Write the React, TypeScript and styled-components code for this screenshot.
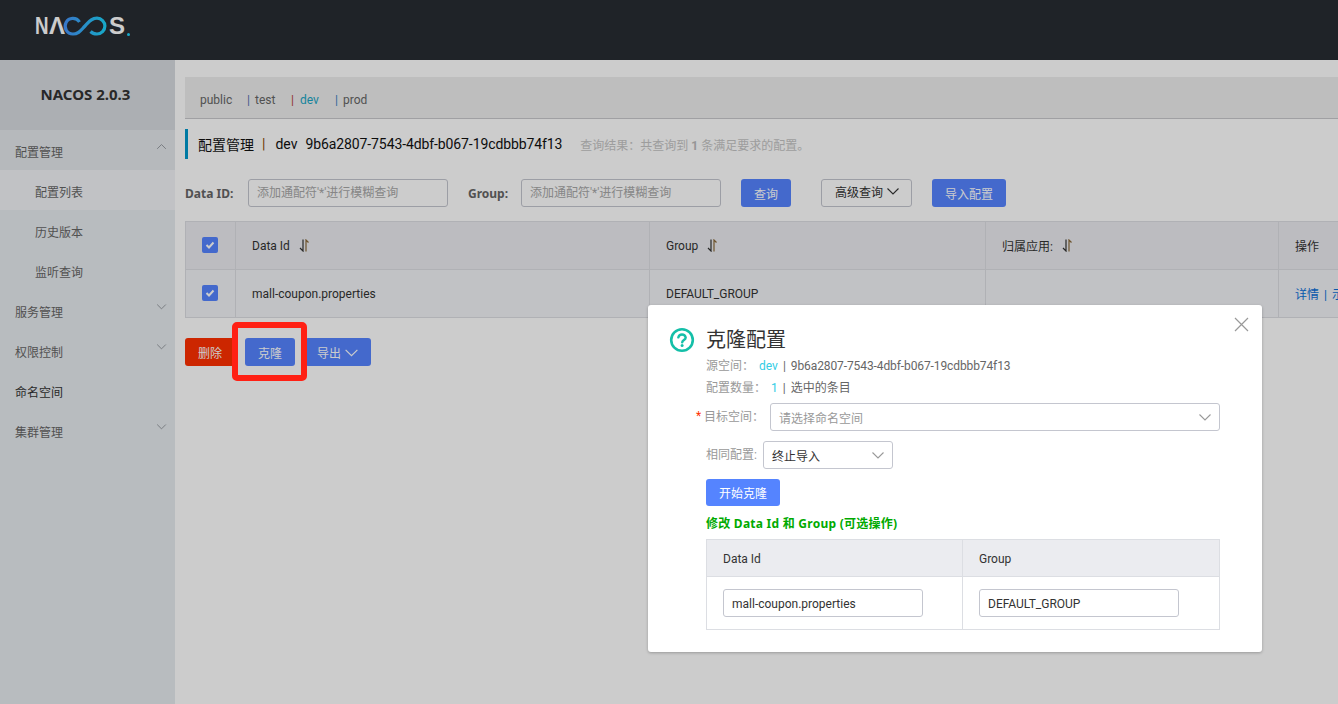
import styled, { createGlobalStyle } from "styled-components";

const GlobalStyle = createGlobalStyle`
  html, body {
    margin: 0;
    height: 100%;
    overflow: hidden;
    background: #fff;
    font-family: Roboto, "Noto Sans CJK SC", sans-serif;
    font-size: 12px;
    color: #333;
  }
  * { box-sizing: border-box; }
`;

const Page = styled.div`
  position: relative;
  width: 1338px;
  height: 704px;
  overflow: hidden;
`;

const Header = styled.header`
  height: 60px;
  background: #272c33;
  padding: 14px 0 0 35px;
`;

const Logo = styled.div`
  display: flex;
  align-items: center;
  height: 24px;
  color: #fff;
  font-family: "Liberation Sans", sans-serif;
  font-weight: 700;
  font-size: 24px;
  line-height: 24px;
`;

const LogoLetter = styled.span<{ $width: number; $scale?: number }>`
  display: inline-block;
  flex: none;
  width: ${(p) => p.$width}px;
  transform: scaleX(${(p) => p.$scale ?? 1});
  transform-origin: left center;
`;

const LogoWave = styled.svg`
  flex: none;
  margin-left: -3px;
`;

const LogoDot = styled.span`
  align-self: flex-end;
  width: 3px;
  height: 3px;
  margin: 0 0 2px 1px;
  background: #1ed2fa;
  border-radius: 50%;
`;

const Body = styled.div`
  display: flex;
  height: 644px;
`;

const Sidebar = styled.nav`
  flex: 0 0 175px;
  background: #e6ebef;
`;

const Version = styled.div`
  height: 70px;
  background: #d8dbe0;
  padding: 24px 4px 0 0;
  text-align: center;
  font-family: "Noto Sans", "Noto Sans CJK SC", sans-serif;
  font-size: 15px;
  line-height: 20px;
  font-weight: 700;
  color: #333;
`;

const MenuItem = styled.div<{ $sub?: boolean; $active?: boolean; $open?: boolean; $dark?: boolean }>`
  height: 40px;
  display: flex;
  align-items: center;
  justify-content: space-between;
  padding: 3px 8px 0 ${(p) => (p.$sub ? 35 : 15)}px;
  color: ${(p) => (p.$dark ? "#333" : "#666")};
  background: ${(p) => (p.$active ? "#f2f3f7" : p.$open ? "#e4e8ec" : "transparent")};
  svg {
    margin-bottom: 10px;
    color: #8b9096;
  }
`;

const Main = styled.main`
  flex: 1;
  min-width: 0;
  padding: 17px 0 0 10px;
  overflow: hidden;
`;

const NamespaceBar = styled.div`
  height: 42px;
  background: #eeeeee;
  border-bottom: 1px solid #c8c8cc;
  display: flex;
  align-items: flex-end;
  padding: 0 0 8px 15px;
  line-height: 20px;
  color: #666;
`;

const Namespace = styled.span<{ $width: number; $active?: boolean }>`
  width: ${(p) => p.$width}px;
  color: ${(p) => (p.$active ? "#1ba6c4" : "#666")};
`;

const NsDivider = styled.span<{ $color: string; $width?: number }>`
  width: ${(p) => p.$width ?? 8}px;
  color: ${(p) => p.$color};
`;

const PageTitle = styled.div`
  margin-top: 10px;
  height: 30px;
  border-left: 3px solid #09c;
  padding-left: 10px;
  display: flex;
  align-items: center;
  font-size: 14px;
  color: #111;
  white-space: pre;
`;

const TitleBar = styled.span`
  margin: 0 10px 0 8px;
  color: #8a4a00;
`;

const NamespaceId = styled.span`
  margin-left: 8px;
  letter-spacing: -0.1px;
`;

const QueryResult = styled.span`
  margin-left: 18px;
  font-size: 12px;
  color: #c5c5c5;
  strong {
    color: #bbb;
  }
`;

const FilterRow = styled.div`
  display: flex;
  align-items: center;
  height: 28px;
  margin-top: 20px;
`;

const FilterLabel = styled.label<{ $width: number }>`
  flex: 0 0 ${(p) => p.$width}px;
  font-family: "Noto Sans", "Noto Sans CJK SC", sans-serif;
  font-weight: 700;
  color: #666;
`;

const FilterInput = styled.div`
  width: 200px;
  height: 28px;
  border: 1px solid #c4c6cf;
  border-radius: 3px;
  padding-left: 8px;
  line-height: 27px;
  color: #a8a8a8;
  margin-right: 20px;
  white-space: nowrap;
`;

const Button = styled.button<{ $tone: "primary" | "danger" | "ghost"; $width: number; $gap?: number }>`
  flex: none;
  width: ${(p) => p.$width}px;
  height: 28px;
  margin-right: ${(p) => p.$gap ?? 0}px;
  padding: 0 0 ${(p) => (p.$tone === "ghost" ? 4 : 0)}px ${(p) => (p.$tone === "ghost" ? 2 : 0)}px;
  border: ${(p) => (p.$tone === "ghost" ? "1px solid #c4c6cf" : "0")};
  border-radius: 3px;
  font: inherit;
  color: ${(p) => (p.$tone === "ghost" ? "#333" : "#fff")};
  background: ${(p) =>
    p.$tone === "primary" ? "#5584ff" : p.$tone === "danger" ? "#ff3000" : "transparent"};
  display: inline-flex;
  align-items: center;
  justify-content: center;
  gap: 3px;
`;

const Grid = styled.div`
  margin-top: 14px;
  width: 1200px;
  display: grid;
  grid-template-columns: 50px 414px 336px 293px 106px;
  border-top: 1px solid #dcdee3;
  border-left: 1px solid #dcdee3;
`;

const Cell = styled.div<{ $head?: boolean; $center?: boolean }>`
  height: 48px;
  display: flex;
  align-items: center;
  justify-content: ${(p) => (p.$center ? "center" : "flex-start")};
  padding: 0 ${(p) => (p.$center ? 1 : 0)}px 0 ${(p) => (p.$center ? 0 : 16)}px;
  gap: 9px;
  border-right: 1px solid #dcdee3;
  border-bottom: 1px solid #dcdee3;
  background: ${(p) => (p.$head ? "#ebecf0" : "#f2f3f7")};
  color: #333;
  white-space: nowrap;
`;

const Check = styled.span`
  width: 16px;
  height: 16px;
  margin-bottom: 2px;
  border-radius: 2px;
  background: #5584ff;
  display: flex;
  align-items: center;
  justify-content: center;
`;

const RowLink = styled.span`
  color: #0a6fd8;
`;

const Separator = styled.span`
  margin: 0 5px;
`;

const Actions = styled.div`
  display: flex;
  margin-top: 20px;
`;

const Overlay = styled.div`
  position: absolute;
  inset: 0;
  background: rgba(0, 0, 0, 0.2);
`;

const Highlight = styled.div`
  position: absolute;
  left: 232px;
  top: 322px;
  width: 75px;
  height: 59px;
  border: 6px solid #ff2014;
  border-radius: 5px;
`;

const Dialog = styled.section`
  position: absolute;
  left: 648px;
  top: 305px;
  width: 614px;
  height: 347px;
  background: #fff;
  border-radius: 3px;
  box-shadow: 0 1px 3px rgba(0, 0, 0, 0.25);
  padding: 22px 42px 0 21px;
  display: grid;
  grid-template-columns: 37px 1fr;
`;

const CloseButton = styled.span`
  position: absolute;
  right: 13px;
  top: 12px;
  display: flex;
  color: #999;
`;

const HelpIcon = styled.span`
  display: flex;
  height: 26px;
`;

const DialogBody = styled.div`
  min-width: 0;
`;

const DialogTitle = styled.h2`
  margin: 0;
  height: 26px;
  font-size: 20px;
  line-height: 26px;
  font-weight: 400;
  color: #333;
`;

const InfoRow = styled.div<{ $top: number }>`
  margin-top: ${(p) => p.$top}px;
  height: 18px;
  line-height: 18px;
  color: #666;
  white-space: pre;
`;

const InfoLabel = styled.span<{ $width: number }>`
  display: inline-block;
  width: ${(p) => p.$width}px;
  color: #999;
`;

const InfoId = styled.span`
  letter-spacing: -0.1px;
`;

const Accent = styled.span`
  color: #33cde5;
`;

const FieldRow = styled.div<{ $top: number }>`
  position: relative;
  display: flex;
  align-items: center;
  margin-top: ${(p) => p.$top}px;
  height: 28px;
`;

const FieldLabel = styled.span<{ $width: number; $shift?: number }>`
  flex: 0 0 ${(p) => p.$width}px;
  color: #999;
  margin: -3px 0 0 ${(p) => p.$shift ?? 0}px;
`;

const Star = styled.span`
  position: absolute;
  left: -10px;
  top: 3px;
  color: #ff3000;
  line-height: 20px;
`;

const Select = styled.div<{ $width: number; $placeholder?: boolean }>`
  width: ${(p) => p.$width}px;
  height: 28px;
  border: 1px solid #c4c6cf;
  border-radius: 3px;
  padding: 0 8px;
  display: flex;
  align-items: center;
  justify-content: space-between;
  color: ${(p) => (p.$placeholder ? "#999" : "#333")};
  svg {
    color: #999;
    margin-right: -1px;
  }
`;

const StartButton = styled(Button)`
  display: flex;
  margin-top: 10px;
  height: 27px;
`;

const EditHint = styled.div`
  margin-top: 9px;
  height: 18px;
  line-height: 18px;
  font-family: "Noto Sans", "Noto Sans CJK SC", sans-serif;
  font-weight: 700;
  letter-spacing: 0.25px;
  color: #00aa00;
`;

const CloneTable = styled.div`
  margin-top: 6px;
  width: 514px;
  display: grid;
  grid-template-columns: 256px 257px;
  border-top: 1px solid #dcdee3;
  border-left: 1px solid #dcdee3;
`;

const CloneHead = styled.div`
  height: 37px;
  padding-left: 16px;
  line-height: 38px;
  background: #ebecf0;
  color: #333;
  border-right: 1px solid #dcdee3;
  border-bottom: 1px solid #dcdee3;
`;

const CloneCell = styled.div`
  height: 53px;
  padding: 12px 0 0 16px;
  border-right: 1px solid #dcdee3;
  border-bottom: 1px solid #dcdee3;
`;

const CloneInput = styled.div`
  width: 200px;
  height: 28px;
  border: 1px solid #c4c6cf;
  border-radius: 3px;
  padding-left: 8px;
  line-height: 28px;
  color: #333;
`;

const Chevron = ({ size = 14, up = false }: { size?: number; up?: boolean }) => (
  <svg width={size} height={size} viewBox="0 0 14 14" fill="none" stroke="currentColor" strokeWidth="1.1">
    <path d={up ? "M1.5 10 7 4.5 12.5 10" : "M1.5 4.5 7 10 12.5 4.5"} />
  </svg>
);

const SortIcon = () => (
  <svg width="11" height="13" viewBox="0 0 11 13" fill="none" stroke="#333" strokeWidth="1.2">
    <path d="M4 .5v11.5L1 9" />
    <path d="M7 12.5V1l2.5 2.5" stroke="#8a6a3a" />
  </svg>
);

const CheckBox = () => (
  <Check>
    <svg width="10" height="10" viewBox="0 0 10 10" fill="none" stroke="#fff" strokeWidth="2">
      <path d="M1.5 5 4 7.5 8.5 2.5" />
    </svg>
  </Check>
);

const App = () => (
  <>
    <GlobalStyle />
    <Page>
      <Header>
        <Logo aria-label="NACOS">
          <LogoLetter $width={14} $scale={0.78}>N</LogoLetter>
          <LogoLetter $width={16}>Λ</LogoLetter>
          <LogoWave width="47" height="20" viewBox="0 0 47 20" fill="none" strokeWidth="3.2">
            <defs>
              <linearGradient id="logoWave" x1="0" x2="1" y1="0" y2="0">
                <stop offset="0" stopColor="#4696fa" />
                <stop offset="1" stopColor="#1ed2fa" />
              </linearGradient>
            </defs>
            <path
              d="M17.5 6A7.8 7.8 0 1 0 11 18C17 18 19 14 23 10 27 6 29 2.2 35 2.2A7.8 7.8 0 1 1 35 18C32 18 30 17 28.5 15.5"
              stroke="url(#logoWave)"
            />
          </LogoWave>
          <LogoLetter $width={17}>S</LogoLetter>
          <LogoDot />
        </Logo>
      </Header>
      <Body>
        <Sidebar>
          <Version>NACOS 2.0.3</Version>
          <MenuItem $open>
            配置管理
            <Chevron size={11} up />
          </MenuItem>
          <MenuItem $sub $active>
            配置列表
          </MenuItem>
          <MenuItem $sub>历史版本</MenuItem>
          <MenuItem $sub>监听查询</MenuItem>
          <MenuItem>
            服务管理
            <Chevron size={11} />
          </MenuItem>
          <MenuItem>
            权限控制
            <Chevron size={11} />
          </MenuItem>
          <MenuItem $dark>命名空间</MenuItem>
          <MenuItem>
            集群管理
            <Chevron size={11} />
          </MenuItem>
        </Sidebar>
        <Main>
          <NamespaceBar>
            <Namespace $width={47}>public</Namespace>
            <NsDivider $color="#5b6fb0">|</NsDivider>
            <Namespace $width={36}>test</Namespace>
            <NsDivider $color="#b5423a" $width={9}>|</NsDivider>
            <Namespace $width={35} $active>
              dev
            </Namespace>
            <NsDivider $color="#3a7fc0">|</NsDivider>
            <Namespace $width={40}>prod</Namespace>
          </NamespaceBar>
          <PageTitle>
            配置管理<TitleBar>|</TitleBar>dev<NamespaceId>9b6a2807-7543-4dbf-b067-19cdbbb74f13</NamespaceId>
            <QueryResult>
              查询结果：共查询到 <strong>1</strong> 条满足要求的配置。
            </QueryResult>
          </PageTitle>
          <FilterRow>
            <FilterLabel $width={63}>Data ID:</FilterLabel>
            <FilterInput>添加通配符'*'进行模糊查询</FilterInput>
            <FilterLabel $width={53}>Group:</FilterLabel>
            <FilterInput>添加通配符'*'进行模糊查询</FilterInput>
            <Button $tone="primary" $width={50} $gap={30}>
              查询
            </Button>
            <Button $tone="ghost" $width={91} $gap={20}>
              高级查询
              <Chevron size={14} />
            </Button>
            <Button $tone="primary" $width={74}>
              导入配置
            </Button>
          </FilterRow>
          <Grid>
            <Cell $head $center>
              <CheckBox />
            </Cell>
            <Cell $head>
              Data Id
              <SortIcon />
            </Cell>
            <Cell $head>
              Group
              <SortIcon />
            </Cell>
            <Cell $head>
              归属应用:
              <SortIcon />
            </Cell>
            <Cell $head>操作</Cell>
            <Cell $center>
              <CheckBox />
            </Cell>
            <Cell>mall-coupon.properties</Cell>
            <Cell>DEFAULT_GROUP</Cell>
            <Cell />
            <Cell>
              <RowLink>
                详情<Separator>|</Separator>示例代码
              </RowLink>
            </Cell>
          </Grid>
          <Actions>
            <Button $tone="danger" $width={50} $gap={10}>
              删除
            </Button>
            <Button $tone="primary" $width={50} $gap={10}>
              克隆
            </Button>
            <Button $tone="primary" $width={66}>
              导出
              <Chevron size={15} />
            </Button>
          </Actions>
        </Main>
      </Body>
      <Overlay />
      <Highlight />
      <Dialog>
        <CloseButton>
          <svg width="15" height="15" viewBox="0 0 15 15" fill="none" stroke="currentColor" strokeWidth="1.2">
            <path d="M1 1l13 13M14 1 1 14" />
          </svg>
        </CloseButton>
        <HelpIcon>
          <svg width="26" height="26" viewBox="0 0 26 26" fill="none">
            <circle cx="13" cy="13" r="10.8" stroke="#14bfa8" strokeWidth="2.6" />
            <path
              d="M9.3 10.4a3.8 3.8 0 0 1 7.4 0c0 2.6-3.3 2.6-3.5 5"
              stroke="#14bfa8"
              strokeWidth="2.4"
              strokeLinecap="round"
            />
            <circle cx="13.1" cy="18.6" r="1.5" fill="#14bfa8" />
          </svg>
        </HelpIcon>
        <DialogBody>
          <DialogTitle>克隆配置</DialogTitle>
          <InfoRow $top={4}>
            <InfoLabel $width={53}>源空间：</InfoLabel>
            <Accent>dev</Accent>
            <Separator>|</Separator>
            <InfoId>9b6a2807-7543-4dbf-b067-19cdbbb74f13</InfoId>
          </InfoRow>
          <InfoRow $top={4}>
            <InfoLabel $width={65}>配置数量：</InfoLabel>
            <Accent>1</Accent>
            <Separator>|</Separator>
            选中的条目
          </InfoRow>
          <FieldRow $top={6}>
            <Star>*</Star>
            <FieldLabel $width={66} $shift={-2}>目标空间：</FieldLabel>
            <Select $width={450} $placeholder>
              请选择命名空间
              <Chevron />
            </Select>
          </FieldRow>
          <FieldRow $top={10}>
            <FieldLabel $width={57}>相同配置:</FieldLabel>
            <Select $width={130}>
              终止导入
              <Chevron />
            </Select>
          </FieldRow>
          <StartButton $tone="primary" $width={74}>
            开始克隆
          </StartButton>
          <EditHint>修改 Data Id 和 Group (可选操作)</EditHint>
          <CloneTable>
            <CloneHead>Data Id</CloneHead>
            <CloneHead>Group</CloneHead>
            <CloneCell>
              <CloneInput>mall-coupon.properties</CloneInput>
            </CloneCell>
            <CloneCell>
              <CloneInput>DEFAULT_GROUP</CloneInput>
            </CloneCell>
          </CloneTable>
        </DialogBody>
      </Dialog>
    </Page>
  </>
);

export default App;
